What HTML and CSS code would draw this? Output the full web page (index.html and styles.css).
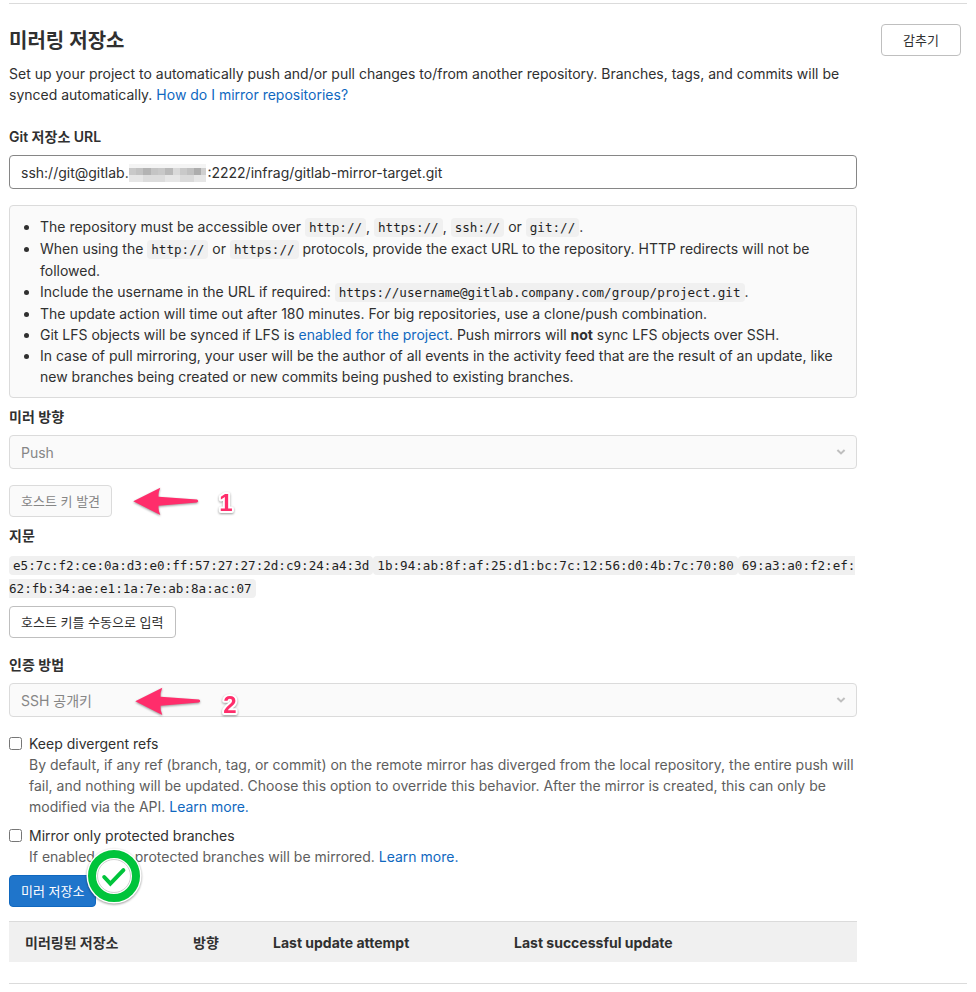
FILE: index.html
```html
<!DOCTYPE html>
<html lang="ko">
<head>
    <meta charset="UTF-8">
    <meta name="viewport" content="width=device-width, initial-scale=1.0">
    <title>미러링 저장소</title>
    <link rel="stylesheet" href="styles.css">
</head>
<body>
    <section class="settings">
        <div class="settings-header">
            <h4>미러링 저장소</h4>
            <p>Set up your project to automatically push and/or pull changes to/from another repository. Branches, tags, and commits will be synced automatically. <a href="#">How do I mirror repositories?</a></p>
        </div>
        <button type="button" class="btn btn-toggle">감추기</button>

        <form class="settings-content">
            <div class="form-group">
                <label class="label" for="url">Git 저장소 URL</label>
                <div class="control">
                    <input type="text" class="form-control" id="url" value="ssh://git@gitlab.                    :2222/infrag/gitlab-mirror-target.git">
                    <!-- Hides the company part of the host name -->
                    <svg class="mosaic" viewBox="0 0 77 18" shape-rendering="crispEdges" aria-hidden="true">
                        <rect width="77" height="18" fill="#e6e6e6"/>
                        <rect width="77" height="4" fill="#f4f4f4"/>
                        <rect x="0" y="4" width="7" height="7" fill="#c9c9c9"/>
                        <rect x="7" y="4" width="7" height="7" fill="#c2c2c2"/>
                        <rect x="14" y="4" width="8" height="7" fill="#b3b3b3"/>
                        <rect x="22" y="4" width="7" height="7" fill="#c4c4c4"/>
                        <rect x="29" y="4" width="7" height="7" fill="#c8c8c8"/>
                        <rect x="36" y="4" width="8" height="7" fill="#b9b9b9"/>
                        <rect x="44" y="4" width="7" height="7" fill="#d9d9d9"/>
                        <rect x="51" y="4" width="7" height="7" fill="#c9c9c9"/>
                        <rect x="58" y="4" width="7" height="7" fill="#c0c0c0"/>
                        <rect x="65" y="4" width="7" height="7" fill="#adadad"/>
                        <rect x="72" y="4" width="5" height="7" fill="#cfcfcf"/>
                        <rect x="14" y="11" width="22" height="7" fill="#dcdcdc"/>
                        <rect x="51" y="11" width="14" height="7" fill="#dadada"/>
                    </svg>
                </div>
            </div>

            <div class="info-well">
                <ul>
                    <li>The repository must be accessible over <code>http://</code>, <code>https://</code>, <code>ssh://</code> or <code>git://</code>.</li>
                    <li>When using the <code>http://</code> or <code>https://</code> protocols, provide the exact URL to the repository. HTTP redirects will not be followed.</li>
                    <li>Include the username in the URL if required: <code>https://username@gitlab.company.com/group/project.git</code>.</li>
                    <li>The update action will time out after 180 minutes. For big repositories, use a clone/push combination.</li>
                    <li>Git LFS objects will be synced if LFS is <a href="#">enabled for the project</a>. Push mirrors will <b>not</b> sync LFS objects over SSH.</li>
                    <li>In case of pull mirroring, your user will be the author of all events in the activity feed that are the result of an update, like new branches being created or new commits being pushed to existing branches.</li>
                </ul>
            </div>

            <div class="form-group">
                <label class="label" for="direction">미러 방향</label>
                <div class="control">
                    <select class="form-control" id="direction" disabled>
                        <option>Push</option>
                    </select>
                    <svg class="chevron" viewBox="0 0 10 8" aria-hidden="true"><path d="M1.4 2 5 5.4 8.6 2"/></svg>
                </div>
            </div>

            <div class="host-keys">
                <button type="button" class="btn" disabled>호스트 키 발견</button>
                <svg class="note" viewBox="0 0 110 34" role="img" aria-label="1">
                    <path d="M1.3 15.3 28.3 1.7Q26 7 26.6 10.8L65 13.6Q67.4 15 65 16.6L26.6 19.8Q26 24 28.3 29Z"/>
                    <text x="94" y="25">1</text>
                </svg>
            </div>

            <div class="fingerprints">
                <div class="label">지문</div>
                <div class="fingerprint-list"><code>e5:7c:f2:ce:0a:d3:e0:ff:57:27:27:2d:c9:24:a4:3d</code><code>1b:94:ab:8f:af:25:d1:bc:7c:12:56:d0:4b:7c:70:80</code><code>69:a3:a0:f2:ef:62:fb:34:ae:e1:1a:7e:ab:8a:ac:07</code></div>
                <button type="button" class="btn">호스트 키를 수동으로 입력</button>
            </div>

            <div class="form-group">
                <label class="label" for="auth">인증 방법</label>
                <div class="control">
                    <select class="form-control" id="auth" disabled>
                        <option>SSH 공개키</option>
                    </select>
                    <svg class="chevron" viewBox="0 0 10 8" aria-hidden="true"><path d="M1.4 2 5 5.4 8.6 2"/></svg>
                    <svg class="note" viewBox="0 0 110 34" role="img" aria-label="2">
                        <path d="M1.3 15.3 28.3 1.7Q26 7 26.6 10.8L65 13.6Q67.4 15 65 16.6L26.6 19.8Q26 24 28.3 29Z"/>
                        <text x="96" y="27">2</text>
                    </svg>
                </div>
            </div>

            <div class="form-check">
                <input type="checkbox" id="divergent">
                <label for="divergent">Keep divergent refs</label>
                <p>By default, if any ref (branch, tag, or commit) on the remote mirror has diverged from the local repository, the entire push will fail, and nothing will be updated. Choose this option to override this behavior. After the mirror is created, this can only be modified via the API. <a href="#">Learn more.</a></p>
            </div>
            <div class="form-check">
                <input type="checkbox" id="protected">
                <label for="protected">Mirror only protected branches</label>
                <p>If enabled, only protected branches will be mirrored. <a href="#">Learn more.</a></p>
            </div>

            <div class="submit">
                <button type="submit" class="btn btn-confirm">미러 저장소</button>
                <svg class="done" viewBox="0 0 60 60" aria-hidden="true">
                    <circle cx="30" cy="30" r="27.5" fill="#fff"/>
                    <circle cx="30" cy="30" r="22" fill="none" stroke="#00c43b" stroke-width="8"/>
                    <circle cx="30" cy="30" r="16.5" fill="none" stroke="#d0d0d0" stroke-width="1"/>
                    <path d="M20.2 31 26.4 37.6 39.4 24.2" fill="none" stroke="#00c43b" stroke-width="4" stroke-linecap="round"/>
                </svg>
            </div>

            <table>
                <thead>
                    <tr>
                        <th class="col-repo">미러링된 저장소</th>
                        <th class="col-direction">방향</th>
                        <th class="col-attempt">Last update attempt</th>
                        <th>Last successful update</th>
                    </tr>
                </thead>
            </table>
        </form>
    </section>
</body>
</html>
```

FILE: styles.css
```css
* {
    margin: 0;
    padding: 0;
    box-sizing: border-box;
}

body {
    padding: 3px 9px 0;
    background-color: #fff;
    color: #303030;
    font-family: Inter, "Noto Sans CJK KR", sans-serif;
    font-size: 14px;
    line-height: 21px;
}

a {
    color: #1068bf;
    text-decoration: none;
}

a:hover {
    text-decoration: underline;
}

code {
    padding: 2px 4px;
    border-radius: 4px;
    background-color: #f0f0f0;
    color: #1f1f1f;
    font-family: "DejaVu Sans Mono", monospace;
    font-size: 90%;
}

.settings {
    display: grid;
    grid-template-columns: 1fr 80px;
    column-gap: 24px;
    align-items: start;
    padding: 20px 6px 21px 0;
    border-top: 1px solid #dbdbdb;
    border-bottom: 1px solid #dbdbdb;
}

.settings-header h4 {
    margin-bottom: 5px;
    font-size: 20px;
    font-weight: 600;
    line-height: 34px;
}

.settings-content {
    padding-top: 21px;
}

.btn {
    height: 32px;
    padding: 0 11px;
    border: 1px solid #bfbfbf;
    border-radius: 4px;
    background-color: #fff;
    color: #303030;
    font-family: inherit;
    font-size: 13px;
    line-height: 16px;
    white-space: nowrap;
    cursor: pointer;
}

.btn:disabled {
    border-color: #dbdbdb;
    background-color: #fafafa;
    color: #868686;
    cursor: not-allowed;
}

.btn-toggle {
    width: 100%;
}

.btn-confirm {
    border-color: #1068bf;
    background-color: #1f75cb;
    color: #fff;
}

.label {
    display: block;
    margin-bottom: 8px;
    font-weight: 600;
}

.form-group {
    margin-bottom: 16px;
}

.control {
    position: relative;
}

.form-control {
    display: block;
    width: 100%;
    height: 34px;
    padding: 0 11px;
    border: 1px solid #868686;
    border-radius: 4px;
    background-color: #fff;
    color: #303030;
    font-family: inherit;
    font-size: 14px;
}

.form-control:disabled {
    border-color: #dbdbdb;
    background-color: #fafafa;
    color: #868686;
    opacity: 1;
    appearance: none;
}

.mosaic {
    position: absolute;
    top: 9px;
    left: 120px;
    width: 77px;
    height: 18px;
}

.chevron {
    position: absolute;
    top: 13px;
    right: 11px;
    width: 10px;
    height: 8px;
    fill: none;
    stroke: #bfbfbf;
    stroke-width: 2;
}

.info-well {
    margin-bottom: 8px;
    padding: 10px;
    border: 1px solid #dbdbdb;
    border-radius: 4px;
    background-color: #fafafa;
}

.info-well ul {
    padding-left: 20px;
}

.host-keys {
    position: relative;
    display: flex;
    margin-bottom: 8px;
}

/* Numbered arrows that show the order of the steps */
.note {
    position: absolute;
    top: 1px;
    left: 123px;
    width: 110px;
    height: 34px;
    overflow: visible;
    fill: #ff2d6b;
    filter: drop-shadow(0 1px 1px rgba(0,0,0,0.4));
}

.control .note {
    top: 3px;
    left: 125px;
}

.note text {
    font-family: "Liberation Sans", Arial, sans-serif;
    font-size: 24px;
    font-weight: bold;
    text-anchor: middle;
    stroke: #fff;
    stroke-width: 4px;
    stroke-linejoin: round;
    paint-order: stroke;
}

.fingerprints {
    margin-bottom: 16px;
}

.fingerprint-list {
    margin-bottom: 6px;
    line-height: 22px;
    word-break: break-all;
}

.form-check {
    position: relative;
    margin-bottom: 8px;
    padding-left: 20px;
}

.form-check input {
    position: absolute;
    top: 4px;
    left: 0;
    width: 13px;
    height: 13px;
}

.form-check p {
    color: #5e5e5e;
}

.submit {
    position: relative;
    display: flex;
    margin-bottom: 14px;
}

.done {
    position: absolute;
    top: -29px;
    left: 75px;
    width: 60px;
    height: 60px;
    filter: drop-shadow(0 1px 1px rgba(0,0,0,0.4));
}

table {
    width: 100%;
    border-collapse: collapse;
    table-layout: fixed;
}

th {
    padding: 10px 16px 9px;
    border-top: 1px solid #dbdbdb;
    background-color: #f0f0f0;
    font-weight: 700;
    text-align: left;
}

.col-repo {
    width: 168px;
}

.col-direction {
    width: 80px;
}

.col-attempt {
    width: 241px;
}
```
